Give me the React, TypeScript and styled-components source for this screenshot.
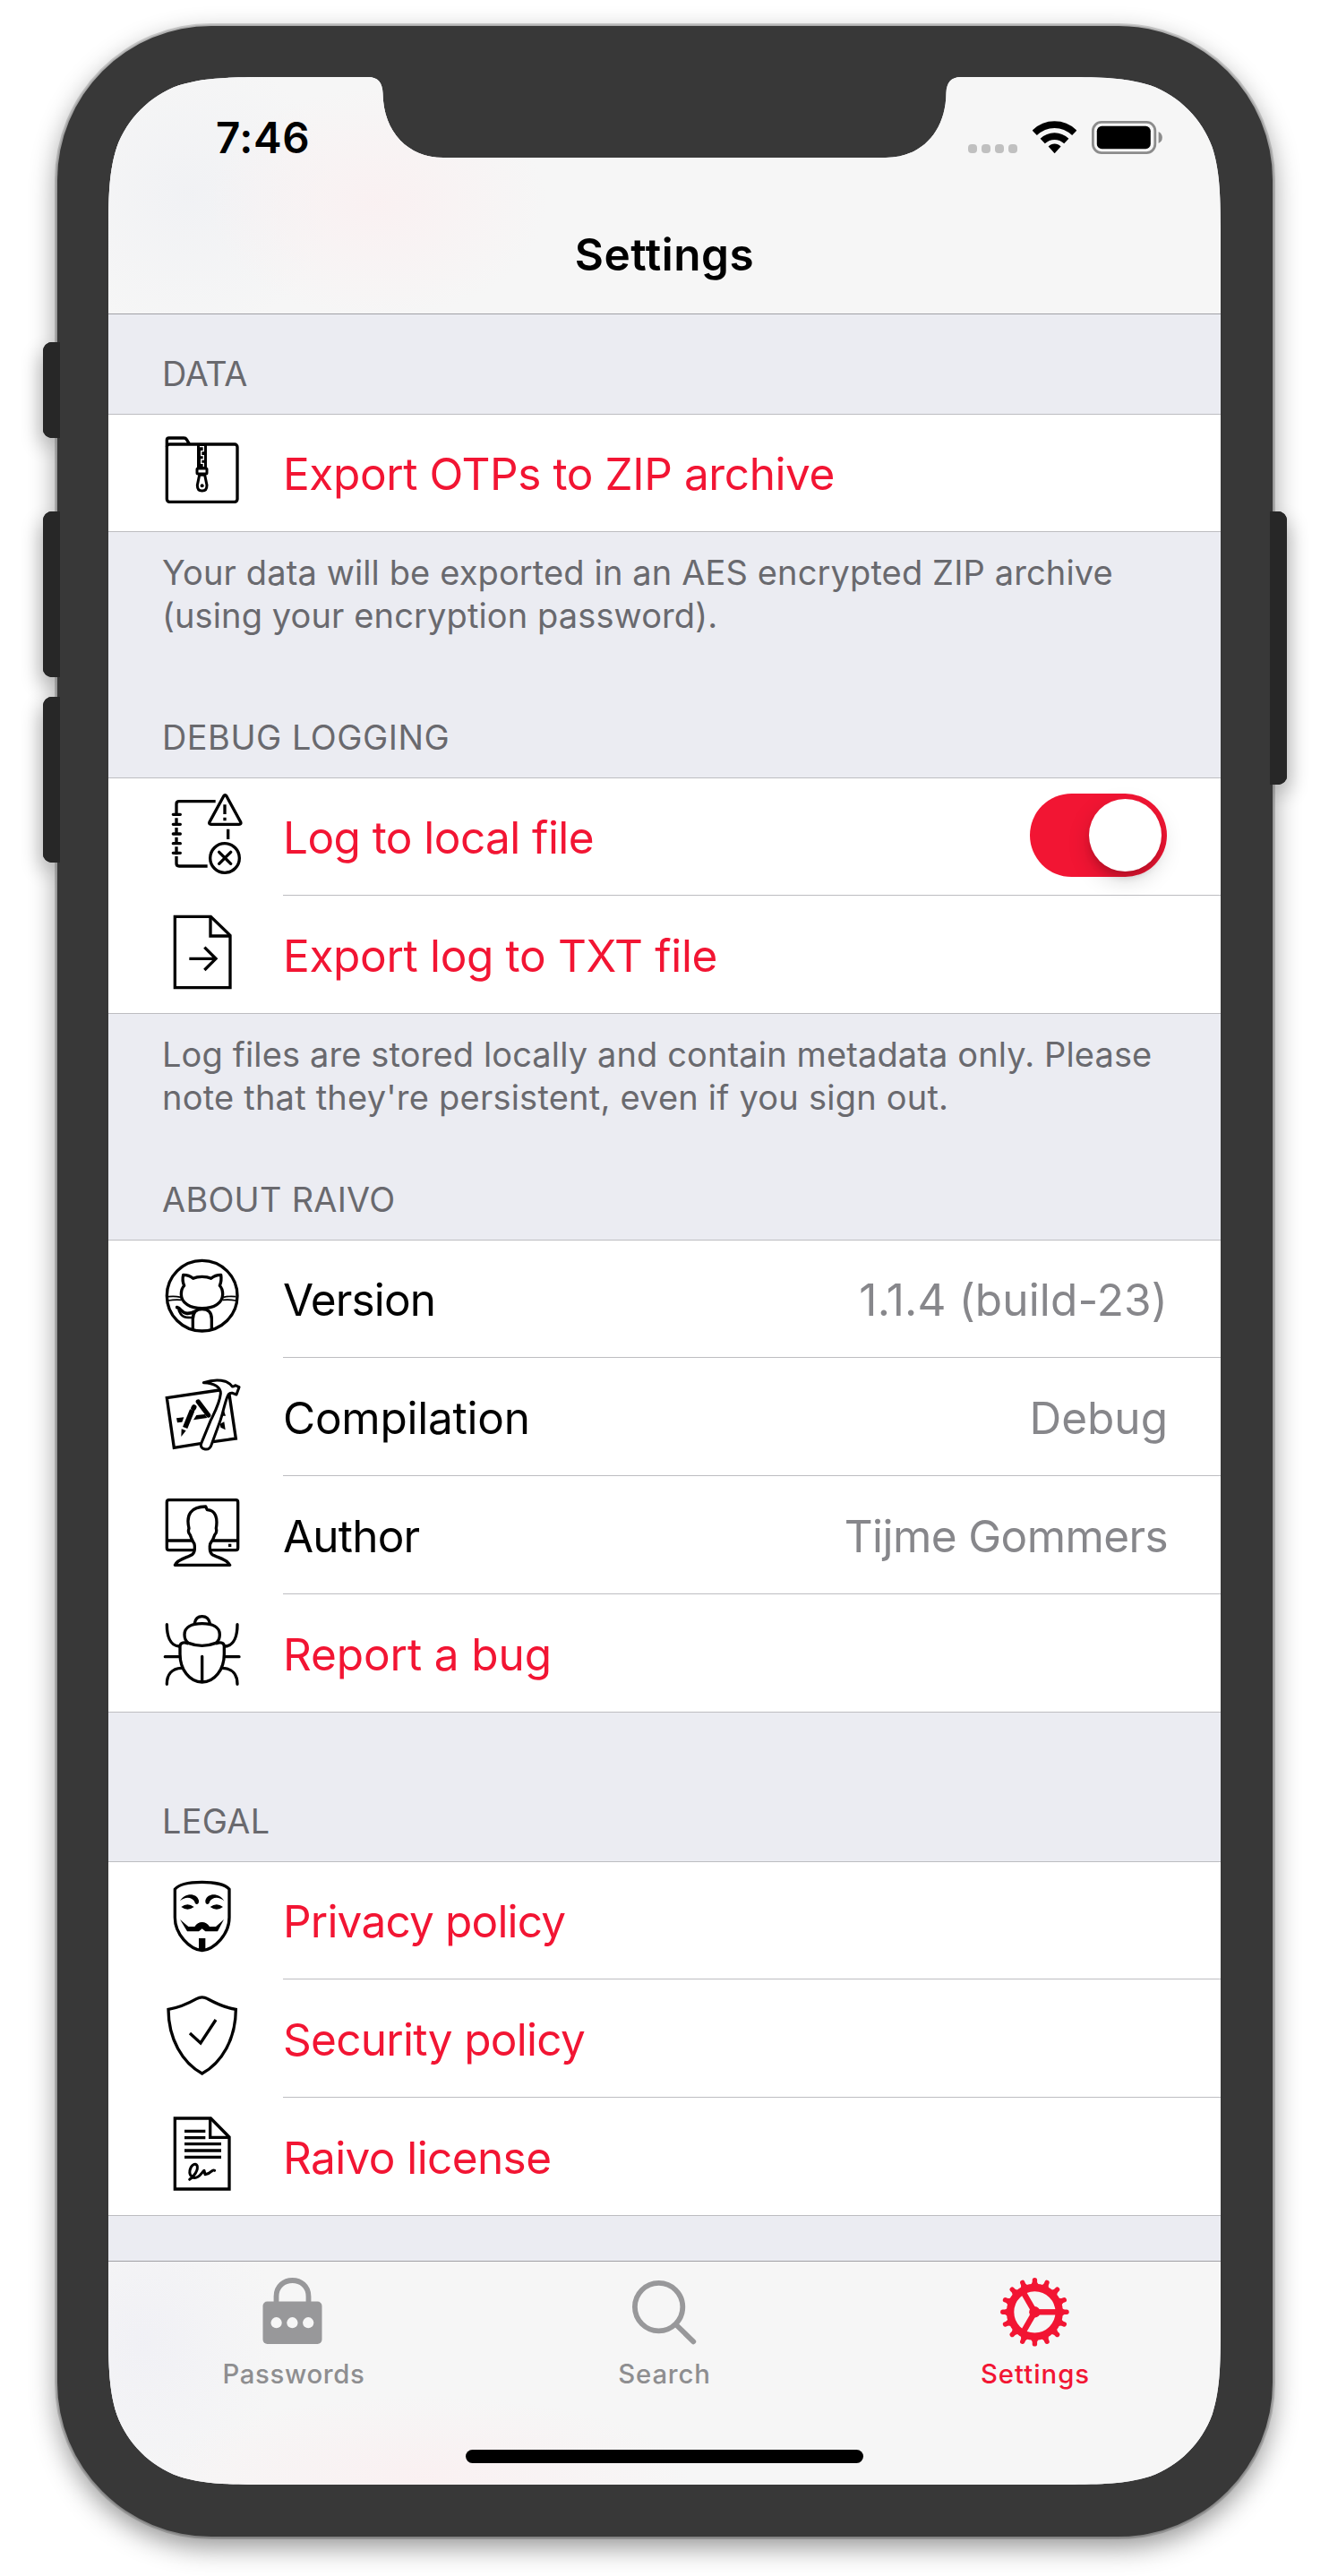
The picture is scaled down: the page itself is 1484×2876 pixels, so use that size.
import React from "react";
import styled, { createGlobalStyle } from "styled-components";

const RED = "#f21533";
const GREY = "#98989a";

const GlobalStyle = createGlobalStyle`
  * { box-sizing: border-box; }
  body {
    margin: 0;
    background: #fff;
    font-family: Inter, "Liberation Sans", sans-serif;
    color: #000;
  }
`;

/* ---------- device ---------- */

const Stage = styled.div`
  width: 1484px;
  height: 2876px;
  padding: 28.5px 63px 0 63.5px;
  overflow: hidden;
`;

const Bezel = styled.div`
  position: relative;
  height: 2803px;
  padding: 57.5px 0 0 57.5px;
  border-radius: 172px;
  background: #383838;
  box-shadow:
    0 0 0 1.5px rgba(0, 0, 0, 0.1),
    0 0 0 3px rgba(0, 0, 0, 0.16),
    0 11px 30px rgba(0, 0, 0, 0.44);
`;

const HardwareKey = styled.div<{ $side: "left" | "right"; $top: number; $height: number }>`
  position: absolute;
  top: ${(p) => p.$top}px;
  ${(p) => p.$side}: -15.5px;
  width: 19px;
  height: ${(p) => p.$height}px;
  border-radius: ${(p) => (p.$side === "left" ? "10px 0 0 10px" : "0 10px 10px 0")};
  background: #272727;
  box-shadow: inset 0 0 0 1px #1f1f1f,
    ${(p) => (p.$side === "left" ? "-4px" : "4px")} 10px 22px -2px rgba(0, 0, 0, 0.32);
  clip-path: ${(p) => (p.$side === "left" ? "inset(-40px 4px -40px -40px)" : "inset(-40px -40px -40px 4px)")};
`;

const KeyCap = styled(HardwareKey)`
  box-shadow: none;
  clip-path: none;
`;

/* continuous-corner outline with the sensor housing cut out of the top edge */
const R = 124.5;
const W = 1242;
const H = 2688;
const k = [1.52866, 1.08849, 0.86841, 0.63149, 0.07491, 0.37282, 0.16906].map((n) => +(n * R).toFixed(2));
const [a, b, c, d, e, f, g] = k;
const outline = [
  `M${a} 0 H290 C301 0 306 6 306.5 18 C307 62 335 90 374 90 H868 C907 90 935 62 935.5 18 C936 6 941 0 952 0 H${W - a}`,
  `C${W - b} 0 ${W - c} 0 ${W - d} ${e} C${W - f} ${g} ${W - g} ${f} ${W - e} ${d} C${W} ${c} ${W} ${b} ${W} ${a}`,
  `V${H - a} C${W} ${H - b} ${W} ${H - c} ${W - e} ${H - d} C${W - g} ${H - f} ${W - f} ${H - g} ${W - d} ${H - e} C${W - c} ${H} ${W - b} ${H} ${W - a} ${H}`,
  `H${a} C${b} ${H} ${c} ${H} ${d} ${H - e} C${f} ${H - g} ${g} ${H - f} ${e} ${H - d} C0 ${H - c} 0 ${H - b} 0 ${H - a}`,
  `V${a} C0 ${b} 0 ${c} ${e} ${d} C${g} ${f} ${f} ${g} ${d} ${e} C${c} 0 ${b} 0 ${a} 0 Z`,
].join(" ");

const Screen = styled.div`
  display: flex;
  flex-direction: column;
  width: ${W}px;
  height: ${H}px;
  background: #ebecf2;
  clip-path: path("${outline}");
`;

/* ---------- top bar ---------- */

const TopBar = styled.header`
  height: 265px;
  border-bottom: 1px solid #a0a0a5;
  background:
    radial-gradient(ellipse 190px 130px at 300px 140px, rgba(250, 240, 241, 0.9), rgba(250, 240, 241, 0)),
    radial-gradient(ellipse 160px 160px at 90px 130px, rgba(240, 241, 244, 0.9), rgba(240, 241, 244, 0)),
    #f6f6f6;
`;

const StatusBar = styled.div`
  display: flex;
  align-items: center;
  justify-content: space-between;
  height: 132px;
  padding: 3px 65px 0 120px;
`;

const Clock = styled.span`
  font-size: 47.5px;
  font-weight: 600;
  line-height: 56px;
  letter-spacing: 0.6px;
`;

const StatusIcons = styled.div`
  display: flex;
  align-items: flex-end;
  gap: 17px;
  height: 37px;
`;

const SignalDots = styled.div`
  display: flex;
  gap: 5px;
  margin-bottom: 1px;
`;

const SignalDot = styled.i`
  width: 10px;
  height: 10px;
  border-radius: 4px;
  background: #c0c0c0;
`;

const Title = styled.h1`
  display: flex;
  align-items: center;
  justify-content: center;
  height: 132px;
  margin: 0;
  font-size: 49.5px;
  font-weight: 600;
  letter-spacing: 0.5px;
`;

/* ---------- grouped list ---------- */

const List = styled.main`
  flex: 1;
  min-height: 0;
  overflow: hidden;
`;

const SectionLabel = styled.h2<{ $height: number; $track: number }>`
  display: flex;
  align-items: flex-end;
  height: ${(p) => p.$height}px;
  margin: 0;
  padding: 0 60px 22px;
  font-size: 37.8px;
  font-weight: 400;
  line-height: 46px;
  letter-spacing: ${(p) => p.$track}px;
  color: #69696e;
`;

const Group = styled.div`
  position: relative;
  background: #fff;
  border: solid #bdbdc1;
  border-width: 1px 0;
`;

const Row = styled.div`
  display: flex;
  height: 132px;
  padding-left: 59px;

  &:first-child { margin-top: -1px; }
  &:last-child { margin-bottom: -1px; }
`;

const RowIcon = styled.svg`
  flex: none;
  width: 92px;
  height: 132px;
  margin-right: 44px;
  fill: none;
  stroke: #000;
  stroke-width: 10;
`;

const RowBody = styled.div`
  display: flex;
  flex: 1;
  align-items: center;
  justify-content: space-between;
  padding: 2px 59px 0 0;
  border-bottom: 1px solid #bdbdc1;

  ${Row}:last-child & { border-bottom-color: transparent; }
`;

const RowTitle = styled.span<{ $link?: boolean; $track: number }>`
  font-size: 49.5px;
  line-height: 60px;
  letter-spacing: ${(p) => p.$track}px;
  color: ${(p) => (p.$link ? RED : "#000")};
`;

const RowValue = styled.span<{ $track: number }>`
  font-size: 49.5px;
  line-height: 60px;
  letter-spacing: ${(p) => p.$track}px;
  color: #87878b;
`;

const Note = styled.p<{ $height: number }>`
  height: ${(p) => p.$height}px;
  margin: 0;
  padding: 21px 0 0 60px;
  font-size: 38px;
  line-height: 48px;
  color: #69696e;
`;

const NoteLine = styled.span<{ $track: number }>`
  display: block;
  white-space: nowrap;
  letter-spacing: ${(p) => p.$track}px;
`;

const Toggle = styled.div`
  display: flex;
  justify-content: flex-end;
  width: 153px;
  height: 93px;
  margin: 0 1px 4px 0;
  padding: 6px;
  border-radius: 47px;
  background: ${RED};
`;

const Knob = styled.div`
  width: 81px;
  height: 81px;
  border-radius: 50%;
  background: #fff;
  box-shadow: 0 9px 24px rgba(0, 0, 0, 0.17), 0 8px 8px -2px rgba(0, 0, 0, 0.14);
`;

/* ---------- tab bar ---------- */

const TabBar = styled.footer`
  display: flex;
  flex-direction: column;
  justify-content: space-between;
  align-items: center;
  height: 250px;
  padding-bottom: 24px;
  border-top: 1px solid #a0a0a5;
  background:
    radial-gradient(ellipse 300px 90px at 350px 240px, rgba(250, 240, 241, 0.9), rgba(250, 240, 241, 0)),
    radial-gradient(ellipse 150px 180px at 40px 90px, rgba(240, 240, 245, 0.9), rgba(240, 240, 245, 0)),
    #f6f6f6;
`;

const Tabs = styled.nav`
  display: grid;
  grid-template-columns: repeat(3, 1fr);
  width: 100%;
  padding-top: 8px;
`;

const Tab = styled.div<{ $active?: boolean }>`
  display: flex;
  flex-direction: column;
  align-items: center;
  gap: 10px;
  color: ${(p) => (p.$active ? RED : GREY)};
`;

const TabIcon = styled.svg`
  width: 100px;
  height: 90px;
`;

const TabLabel = styled.span<{ $track: number; $active?: boolean }>`
  font-size: 29.3px;
  font-weight: 500;
  line-height: 36px;
  letter-spacing: ${(p) => p.$track}px;
  color: ${(p) => (p.$active ? RED : "#8e8e90")};
`;

const HomeIndicator = styled.div`
  width: 444px;
  height: 15px;
  border-radius: 8px;
  background: #000;
`;

/* ---------- icons ---------- */

const ZipFolder = () => (
  <RowIcon viewBox="60 6 276 396">
    <rect x="79" y="108" width="236" height="193" rx="9" />
    <path d="M79 116V94Q79 87 86 87H136Q142 87 145 92L154 107" />
    <path d="M180 110H213V186H180Z" fill="#000" stroke="none" />
    <path d="M189 116H202V131H194V146H202V159H194V172H202V183" stroke="#fff" strokeWidth="4" />
    <path d="M188 211L181 245Q181 264 197 264Q213 264 213 245L206 211Z" fill="#fff" strokeWidth="9" />
    <rect x="180" y="189" width="33" height="18" rx="3" fill="#fff" strokeWidth="9" />
    <circle cx="197" cy="247" r="6" fill="#000" stroke="none" />
  </RowIcon>
);

const LogBook = () => (
  <RowIcon viewBox="60 24 276 396">
    <path d="M242 104H120Q111 104 111 113V148M111 160V181M111 192V213M111 224V245M111 256V283M111 288V312Q111 321 120 321H215" />
    <path d="M100 148H124M100 181H124M100 213H124M100 245H124M100 277H124" strokeLinecap="round" />
    <path d="M269 87L222 173Q219 181 227 181H321Q329 181 326 173L279 87Q274 79 269 87Z" />
    <path d="M273 115V147M273 158V169M284 197V231" />
    <circle cx="273" cy="294" r="49" />
    <path d="M254 274L293 313M293 274L254 313" strokeLinecap="round" />
  </RowIcon>
);

const ExportPage = () => (
  <RowIcon viewBox="60 420 276 396">
    <path d="M106 490H226L291 553V728H106Z" />
    <path d="M225 490V555H291" />
    <path d="M154 631H241M205 593L243 631L205 669" />
  </RowIcon>
);

const Octocat = () => (
  <RowIcon viewBox="60 12 276 396">
    <circle cx="197" cy="200" r="118" />
    <path
      strokeLinejoin="round"
      d="M197 136C185 136 175 138 167 142C158 134 147 130 134 130C131 142 132 155 137 166C130 173 127 183 127 195C127 225 158 242 197 242C236 242 266 225 266 195C266 183 263 173 256 166C261 155 262 142 260 130C247 130 236 134 227 142C219 138 209 136 197 136Z"
    />
    <path d="M84 203Q105 200 126 205M84 216Q105 212 128 214M310 203Q289 200 268 205M310 216Q289 212 266 214" strokeWidth="5" />
    <path d="M166 314V278Q166 245 197 245Q229 245 229 278V314" />
    <path d="M113 239C128 242 128 260 148 259C158 259 166 257 172 253" strokeWidth="11" strokeLinecap="round" />
    <path d="M118 246C127 270 136 274 164 273" strokeWidth="8" />
  </RowIcon>
);

const HammerBoard = () => (
  <RowIcon viewBox="60 408 276 396">
    <path d="M255 516L79 542L103 709L192 695M234 689L310 678L288 530" />
    <g fill="#000" stroke="none">
      <path d="M111 610L136 607L130 623L114 625Z" />
      <path d="M178 600L206 597L214 609L168 616Z" />
      <path d="M128 646L143 652L127 672Z" />
      <path d="M270 585L276 602L264 602Z" />
      <path d="M257 629L271 622L275 649L259 641Z" />
    </g>
    <path d="M164 583L140 642" strokeWidth="17" />
    <path d="M168 577L170 573" strokeWidth="17" strokeLinecap="round" />
    <path d="M184 555L218 600" strokeWidth="16" strokeLinecap="round" />
    <path
      fill="#fff"
      strokeWidth="9"
      strokeLinejoin="round"
      d="M202 491C245 477 284 482 298 504Q304 505 308 500L321 506L312 531L299 526Q288 524 283 535C272 560 268 590 258 618L228 700Q223 716 207 714Q190 711 194 695L226 617C240 588 256 560 259 528C260 506 238 492 202 491Z"
    />
  </RowIcon>
);

const AuthorScreen = () => (
  <RowIcon viewBox="60 24 276 396">
    <rect x="79" y="104" width="238" height="168" rx="7" />
    <path d="M84 240H312" />
    <path d="M285 251H295V261H285Z" fill="#000" stroke="none" />
    <path
      fill="#fff"
      strokeLinejoin="round"
      d="M106 322C116 300 150 297 165 286Q173 279 172 262Q173 251 167 244C162 236 159 227 157 221Q148 213 153 199C142 152 160 127 209 126L214 137C242 138 250 164 244 199Q248 213 239 221C236 230 233 238 228 244Q222 251 223 262Q222 279 230 286C245 297 280 300 290 322Z"
    />
  </RowIcon>
);

const Bug = () => (
  <RowIcon viewBox="60 420 276 396" strokeLinecap="round">
    <path d="M172 517Q176 494 197 494Q218 494 223 517" />
    <path d="M197 518C232 518 256 530 256 555Q256 574 243 583Q220 592 197 592Q174 592 151 583Q138 574 138 555C138 530 162 518 197 518Z" />
    <path d="M148 584Q137 580 131 583Q123 585 123 595V620C123 672 155 714 197 714C239 714 271 672 271 620V595Q271 585 264 583Q257 580 246 584" />
    <path d="M197 628V712M73 629H118M276 629H321" />
    <path d="M79 521C79 555 88 592 120 594M315 521C315 555 306 592 274 594M79 721C79 690 95 668 128 667M315 721C315 690 299 668 266 667" />
  </RowIcon>
);

const brow = "M123 157C138 130 178 128 186 155Q187 168 178 168Q172 166 172 160C163 143 140 142 123 157Z";

const Mask = () => (
  <RowIcon viewBox="60 24 276 396">
    <path d="M106 118C118 102 155 94 197 94C238 94 276 102 288 118V212C288 268 240 318 197 323C154 318 106 268 106 212Z" />
    <g fill="#000" stroke="none">
      <path d={brow} />
      <path d={brow} transform="matrix(-1 0 0 1 394 0)" />
      <path d="M127 177Q148 161 170 177Q148 193 127 177ZM224 177Q246 161 267 177Q246 193 224 177Z" />
      <path d="M123 219L151 243H172Q182 228 197 228Q212 228 222 243H243L270 219L249 259H208L197 250L186 259H147Z" />
      <path d="M186 282H208V320L197 327L186 320Z" />
    </g>
  </RowIcon>
);

const Shield = () => (
  <RowIcon viewBox="60 420 276 396">
    <path d="M84 520C125 514 155 498 178 485Q197 474 216 485C240 498 270 514 310 520C310 620 262 700 197 735C132 700 84 620 84 520Z" />
    <path d="M156 600L192 633L243 555" />
  </RowIcon>
);

const License = () => (
  <RowIcon viewBox="60 816 276 396">
    <path d="M106 885H226L288 948V1122H106Z" />
    <path d="M224 885V949H288" />
    <path d="M138 928H208M138 950H208M138 971H261M138 993H261M138 1015H261" />
    <path
      strokeWidth="9"
      strokeLinecap="round"
      strokeLinejoin="round"
      d="M155 1090C168 1082 186 1058 180 1043C175 1032 159 1042 156 1060C153 1078 168 1090 183 1081C194 1074 198 1064 204 1060L207 1073Q221 1071 228 1063Q234 1057 239 1060"
    />
  </RowIcon>
);

const WifiGlyph = styled.svg`
  width: 49px;
  height: 37px;
  fill: none;
  stroke: #000;
  stroke-width: 7.6;
`;

const BatteryGlyph = styled.svg`
  width: 79px;
  height: 37px;
`;

const Wifi = () => (
  <WifiGlyph viewBox="1153 135 49 37">
    <path d="M1155.2 148.3C1168 136 1187 136 1199.8 148.3" />
    <path d="M1164.2 157.6C1172 150.3 1183 150.3 1190.8 157.6" />
    <path d="M1170.6 163.6C1174.5 159.6 1180.7 159.6 1184.6 163.6L1177.6 171.2Z" fill="#000" stroke="none" />
  </WifiGlyph>
);

const Battery = () => (
  <BatteryGlyph viewBox="0 0 79 37">
    <rect x="1.4" y="1.4" width="69.4" height="34.2" rx="9.5" fill="none" stroke="#8c8c8c" strokeWidth="2.8" />
    <rect x="5.8" y="5.8" width="60" height="25.4" rx="5.5" />
    <path d="M74.6 12Q78.8 14 78.8 18.5T74.6 25Z" fill="#8c8c8c" />
  </BatteryGlyph>
);

const LockIcon = () => (
  <TabIcon viewBox="278 2533 100 90">
    <path d="M308.5 2572V2564C308.5 2540 344.5 2540 344.5 2564V2572" fill="none" stroke={GREY} strokeWidth="5.8" />
    <rect x="293.5" y="2569.5" width="66" height="47.5" rx="5" fill={GREY} />
    <g fill="#f6f6f6">
      <circle cx="308.6" cy="2593.2" r="6.1" />
      <circle cx="326.4" cy="2593.2" r="6.1" />
      <circle cx="344.2" cy="2593.2" r="6.1" />
    </g>
  </TabIcon>
);

const SearchIcon = () => (
  <TabIcon viewBox="692 2533 100 90" fill="none" stroke={GREY} strokeWidth="5.8" strokeLinecap="round">
    <circle cx="735.6" cy="2575.6" r="26.7" />
    <path d="M756 2596.5L774.3 2614.3" />
  </TabIcon>
);

const teeth = Array.from({ length: 16 }, (_, i) => i * 22.5);
const spokes = [0, 120, 240];

const GearIcon = () => (
  <TabIcon viewBox="1106 2533 100 90" fill="none" stroke={RED}>
    <g transform="translate(1155.4 2581.3)">
      <circle r="27.3" strokeWidth="8.4" />
      {teeth.map((t) => (
        <g key={t} transform={`rotate(${t})`}>
          <path d="M28 0H35.6" strokeWidth="5.4" strokeLinecap="round" />
          <path d="M29 -5.4L33.5 -2.4V2.4L29 5.4Z" fill={RED} stroke="none" />
        </g>
      ))}
      {spokes.map((t) => (
        <path key={t} d="M0 0H26" strokeWidth="6.4" transform={`rotate(${t})`} />
      ))}
      <circle r="6.2" fill={RED} stroke="none" />
    </g>
  </TabIcon>
);

/* ---------- data ---------- */

type Item = {
  icon: React.FC;
  title: string;
  track: number;
  link?: boolean;
  value?: string;
  valueTrack?: number;
  toggle?: boolean;
};

type Section = {
  label: string;
  labelTrack: number;
  labelHeight: number;
  items: Item[];
  note?: { height: number; lines: [string, number][] };
};

const sections: Section[] = [
  {
    label: "DATA",
    labelTrack: -0.3,
    labelHeight: 111,
    items: [{ icon: ZipFolder, title: "Export OTPs to ZIP archive", track: -0.4, link: true }],
    note: {
      height: 163,
      lines: [
        ["Your data will be exported in an AES encrypted ZIP archive", 0.13],
        ["(using your encryption password).", 0.12],
      ],
    },
  },
  {
    label: "DEBUG LOGGING",
    labelTrack: 0.55,
    labelHeight: 111,
    items: [
      { icon: LogBook, title: "Log to local file", track: -0.56, link: true, toggle: true },
      { icon: ExportPage, title: "Export log to TXT file", track: -0.33, link: true },
    ],
    note: {
      height: 141,
      lines: [
        ["Log files are stored locally and contain metadata only. Please", 0.13],
        ["note that they're persistent, even if you sign out.", 0.22],
      ],
    },
  },
  {
    label: "ABOUT RAIVO",
    labelTrack: 0.3,
    labelHeight: 111,
    items: [
      { icon: Octocat, title: "Version", track: -0.85, value: "1.1.4 (build-23)", valueTrack: 0.15 },
      { icon: HammerBoard, title: "Compilation", track: -0.25, value: "Debug", valueTrack: 0 },
      { icon: AuthorScreen, title: "Author", track: -0.8, value: "Tijme Gommers", valueTrack: -0.6 },
      { icon: Bug, title: "Report a bug", track: -0.1, link: true },
    ],
  },
  {
    label: "LEGAL",
    labelTrack: 0.3,
    labelHeight: 166,
    items: [
      { icon: Mask, title: "Privacy policy", track: -0.8, link: true },
      { icon: Shield, title: "Security policy", track: -0.7, link: true },
      { icon: License, title: "Raivo license", track: -0.6, link: true },
    ],
  },
];

const keys: { side: "left" | "right"; top: number; height: number }[] = [
  { side: "left", top: 353.5, height: 107 },
  { side: "left", top: 542.5, height: 185 },
  { side: "left", top: 749.5, height: 185 },
  { side: "right", top: 542.5, height: 305 },
];

export default function App() {
  return (
    <Stage>
      <GlobalStyle />
      <Bezel>
        {keys.map((key) => (
          <React.Fragment key={`${key.side}${key.top}`}>
            <HardwareKey $side={key.side} $top={key.top} $height={key.height} />
            <KeyCap $side={key.side} $top={key.top} $height={key.height} />
          </React.Fragment>
        ))}
        <Screen>
          <TopBar>
            <StatusBar>
              <Clock>7:46</Clock>
              <StatusIcons>
                <SignalDots>
                  <SignalDot />
                  <SignalDot />
                  <SignalDot />
                  <SignalDot />
                </SignalDots>
                <Wifi />
                <Battery />
              </StatusIcons>
            </StatusBar>
            <Title>Settings</Title>
          </TopBar>

          <List>
            {sections.map((section) => (
              <section key={section.label}>
                <SectionLabel $height={section.labelHeight} $track={section.labelTrack}>
                  {section.label}
                </SectionLabel>
                <Group>
                  {section.items.map(({ icon: Icon, ...item }) => (
                    <Row key={item.title}>
                      <Icon />
                      <RowBody>
                        <RowTitle $link={item.link} $track={item.track}>
                          {item.title}
                        </RowTitle>
                        {item.value && <RowValue $track={item.valueTrack ?? 0}>{item.value}</RowValue>}
                        {item.toggle && (
                          <Toggle role="switch" aria-checked="true">
                            <Knob />
                          </Toggle>
                        )}
                      </RowBody>
                    </Row>
                  ))}
                </Group>
                {section.note && (
                  <Note $height={section.note.height}>
                    {section.note.lines.map(([text, track]) => (
                      <NoteLine key={text} $track={track}>
                        {text}
                      </NoteLine>
                    ))}
                  </Note>
                )}
              </section>
            ))}
          </List>

          <TabBar>
            <Tabs>
              <Tab>
                <LockIcon />
                <TabLabel $track={0.67}>Passwords</TabLabel>
              </Tab>
              <Tab>
                <SearchIcon />
                <TabLabel $track={0.85}>Search</TabLabel>
              </Tab>
              <Tab $active>
                <GearIcon />
                <TabLabel $track={1} $active>
                  Settings
                </TabLabel>
              </Tab>
            </Tabs>
            <HomeIndicator />
          </TabBar>
        </Screen>
      </Bezel>
    </Stage>
  );
}
